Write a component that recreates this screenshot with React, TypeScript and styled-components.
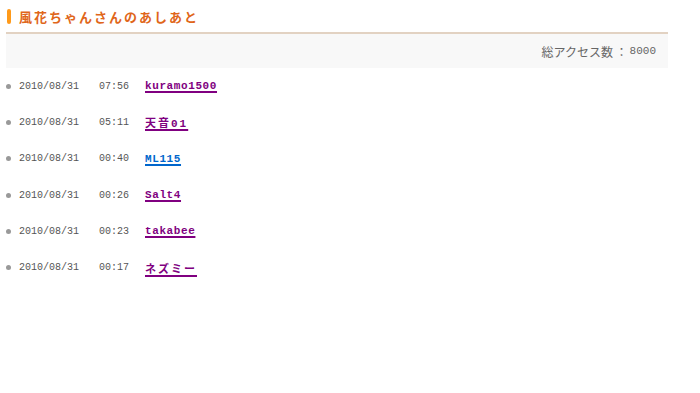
import React from "react";
import styled, { createGlobalStyle } from "styled-components";

const Global = createGlobalStyle`
  body { margin: 0; background: #fff; font-family: "Liberation Mono", "Noto Sans CJK JP", monospace; }
`;

const Page = styled.div`
  width: 700px;
  padding: 6px 32px 0 6px;
  box-sizing: border-box;
`;

const TitleBar = styled.div`
  display: flex;
  align-items: center;
  height: 21px;
  padding-left: 1px;
  border-bottom: 2px solid #e2d2c2;
  padding-bottom: 5px;
`;

const Accent = styled.span`
  width: 4px;
  height: 15px;
  border-radius: 2px;
  background: #ff9a1a;
  margin-right: 8px;
`;

const Title = styled.h1`
  margin: 0;
  font-family: "Noto Sans CJK JP", sans-serif;
  font-size: 13px;
  font-weight: bold;
  letter-spacing: 2px;
  color: #e0661a;
`;

const CounterBox = styled.div`
  background: #f8f8f8;
  height: 34px;
  display: flex;
  align-items: center;
  justify-content: flex-end;
  padding-right: 12px;
  font-family: "Noto Sans CJK JP", sans-serif;
  font-size: 12px;
  color: #666;
`;

const Num = styled.span`
  font-family: "Liberation Mono", monospace;
  font-size: 11px;
  margin-left: 2px;
`;

const List = styled.ul`
  list-style: none;
  margin: 0;
  padding: 0;
`;

const Row = styled.li`
  display: flex;
  align-items: center;
  height: 36.3px;
  font-size: 10px;
  color: #555;
`;

const Dot = styled.span`
  width: 5px;
  height: 5px;
  border-radius: 50%;
  background: #999;
  margin: 0 8px 0 0;
`;

const DateText = styled.span`
  width: 80px;
`;

const TimeText = styled.span`
  width: 46px;
`;

const UserLink = styled.a<{ $blue?: boolean; $cjk?: boolean }>`
  font-family: "Liberation Mono", "Noto Sans CJK JP", monospace;
  font-size: 11px;
  font-weight: bold;
  letter-spacing: ${(p) => (p.$cjk ? "2px" : "0.6px")};
  color: ${(p) => (p.$blue ? "#0066cc" : "#800080")};
  text-decoration: underline;
  text-decoration-thickness: 2px;
  text-underline-offset: 2px;
`;

const rows = [
  { t: "07:56", u: "kuramo1500" },
  { t: "05:11", u: "天音01", cjk: true },
  { t: "00:40", u: "ML115", blue: true },
  { t: "00:26", u: "Salt4" },
  { t: "00:23", u: "takabee" },
  { t: "00:17", u: "ネズミー", cjk: true },
];

export default function App() {
  return (
    <Page>
      <Global />
      <TitleBar>
        <Accent />
        <Title>風花ちゃんさんのあしあと</Title>
      </TitleBar>
      <CounterBox>
        総アクセス数 ：<Num>8000</Num>
      </CounterBox>
      <List>
        {rows.map((r) => (
          <Row key={r.t}>
            <Dot />
            <DateText>2010/08/31</DateText>
            <TimeText>{r.t}</TimeText>
            <UserLink href="#" $blue={r.blue} $cjk={r.cjk}>{r.u}</UserLink>
          </Row>
        ))}
      </List>
    </Page>
  );
}
